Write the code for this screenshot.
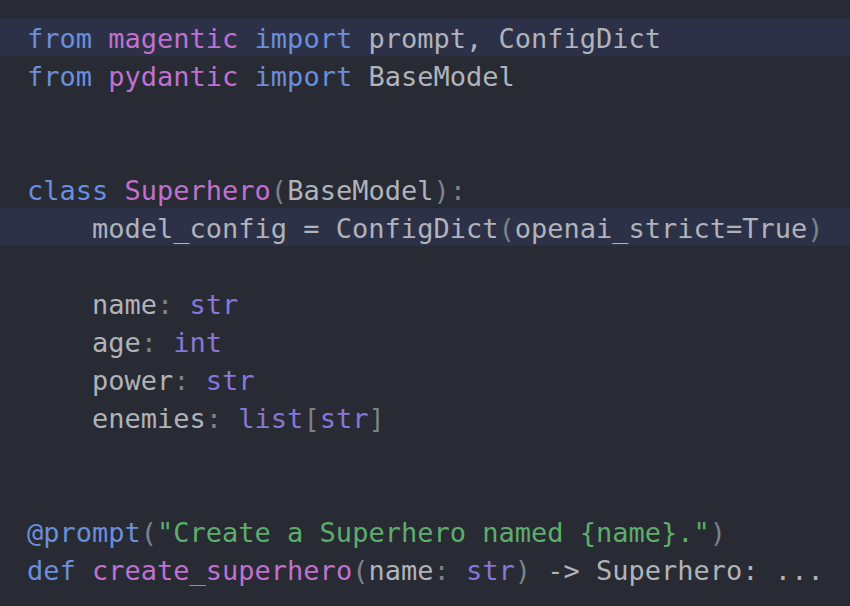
import React from "react";

type Tok = [string, string];

const K = "text-[#6a8fdb]"; // keyword blue
const P = "text-[#c071cf]"; // purple names
const T = "text-[#b0b3ba]"; // plain
const Y = "text-[#8677d8]"; // types
const G = "text-[#5cae6c]"; // string
const D = "text-[#7d818a]"; // punctuation dim

const lines: { toks: Tok[]; hl?: boolean }[] = [
  { toks: [["from", K], [" ", T], ["magentic", P], [" ", T], ["import", K], [" prompt, ConfigDict", T]], hl: true },
  { toks: [["from", K], [" ", T], ["pydantic", P], [" ", T], ["import", K], [" BaseModel", T]] },
  { toks: [] },
  { toks: [] },
  { toks: [["class", K], [" ", T], ["Superhero", P], ["(", D], ["BaseModel", T], ["):", D]] },
  { toks: [["    model_config = ConfigDict", T], ["(", D], ["openai_strict=True", T], [")", D]], hl: true },
  { toks: [] },
  { toks: [["    name", T], [":", D], [" ", T], ["str", Y]] },
  { toks: [["    age", T], [":", D], [" ", T], ["int", Y]] },
  { toks: [["    power", T], [":", D], [" ", T], ["str", Y]] },
  { toks: [["    enemies", T], [":", D], [" ", T], ["list", Y], ["[", D], ["str", Y], ["]", D]] },
  { toks: [] },
  { toks: [] },
  { toks: [["@prompt", K], ["(", D], ['"Create a Superhero named {name}."', G], [")", D]] },
  { toks: [["def", K], [" ", T], ["create_superhero", P], ["(", D], ["name", T], [":", D], [" ", T], ["str", Y], [")", D], [" -> ", T], ["Superhero", T], [": ...", T]] },
];

export default function App() {
  return (
    <div
      className="w-[850px] h-[606px] bg-[#282b33] py-[18px] overflow-hidden"
      style={{ fontFamily: '"DejaVu Sans Mono", "Liberation Mono", monospace' }}
    >
      {lines.map((l, i) => (
        <div
          key={i}
          className={`h-[38px] pt-[4px] leading-[34px] pl-[27px] text-[27px] whitespace-pre ${l.hl ? "bg-[#2c3148]" : ""}`}
        >
          {l.toks.map((t, j) => (
            <span key={j} className={t[1]}>
              {t[0]}
            </span>
          ))}
          {l.toks.length === 0 ? " " : null}
        </div>
      ))}
    </div>
  );
}
